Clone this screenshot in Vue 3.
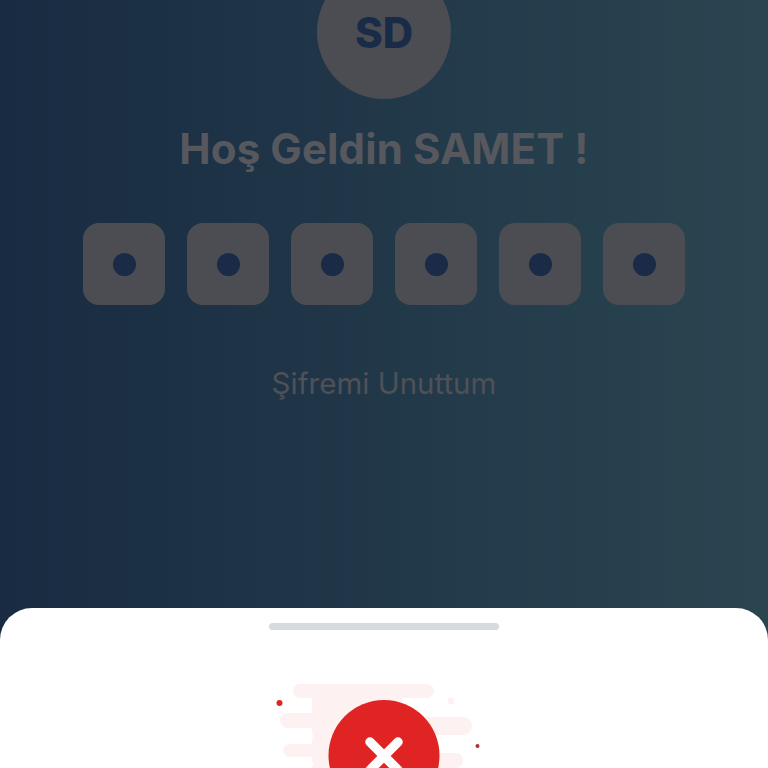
<script setup>
const dots = [1, 2, 3, 4, 5, 6]
</script>

<template>
  <div class="page">
    <div class="avatar">SD</div>
    <h1 class="title">Hoş Geldin SAMET !</h1>
    <div class="pins">
      <div v-for="d in dots" :key="d" class="pin"><span class="dot"></span></div>
    </div>
    <div class="forgot">Şifremi Unuttum</div>
    <div class="sheet">
      <div class="handle"></div>
      <div class="art">
        <svg class="art-svg" width="260" height="108" viewBox="0 0 260 108">
          <g fill="#fdf1f1">
            <rect x="43" y="24" width="141" height="14" rx="7" />
            <rect x="62" y="30" width="90" height="78" />
            <rect x="30" y="53" width="60" height="15" rx="7.500" />
            <rect x="33" y="84" width="60" height="13" rx="6.500" />
            <rect x="120" y="57" width="102" height="18" rx="9" />
            <rect x="120" y="93" width="93" height="15" rx="7.500" />
            <circle cx="201" cy="41" r="3.500" />
          </g>
          <rect x="40" y="39" width="22" height="13" rx="6.500" fill="#fff" />
          <rect x="40" y="69" width="23" height="14" rx="7" fill="#fff" />
          <rect x="40" y="98" width="23" height="12" rx="6" fill="#fff" />
          <circle cx="29.500" cy="43" r="3" fill="#e02424" />
          <circle cx="227.500" cy="86" r="2" fill="#b82a34" />
          <circle cx="134" cy="95.500" r="55.500" fill="#e02424" />
          <path d="M120 82 L148 110 M148 82 L120 110" stroke="#fff" stroke-width="9.500" stroke-linecap="round" fill="none" />
        </svg>
      </div>
    </div>
  </div>
</template>

<style>
html, body { margin: 0; padding: 0; }
</style>

<style scoped>
.page {
  width: 768px;
  height: 768px;
  overflow: hidden;
  display: flex;
  flex-direction: column;
  align-items: center;
  background: linear-gradient(90deg, #192b42 0%, #1a2d43 8%, #2a4550 100%);
  font-family: Inter, "Liberation Sans", sans-serif;
}
.avatar {
  flex: none;
  width: 134px;
  height: 134px;
  margin-top: -35px;
  border-radius: 50%;
  background: #4b4d53;
  color: #1a2b48;
  font-size: 42px;
  font-weight: 800;
  letter-spacing: 0;
  display: flex;
  align-items: center;
  justify-content: center;
}
.title {
  flex: none;
  margin: 25px 0 0;
  height: 50px;
  line-height: 50px;
  font-size: 42px;
  font-weight: 700;
  letter-spacing: 0.1px;
  color: #56585e;
  white-space: nowrap;
}
.pins {
  flex: none;
  display: flex;
  gap: 22px;
  margin-top: 49px;
}
.pin {
  width: 82px;
  height: 82px;
  border-radius: 16px;
  background: #4b4d53;
  display: flex;
  align-items: center;
  justify-content: center;
}
.dot {
  width: 23px;
  height: 23px;
  border-radius: 50%;
  background: #1a2b48;
}
.forgot {
  flex: none;
  margin-top: 60px;
  height: 36px;
  line-height: 36px;
  font-size: 29.500px;
  color: #4f5158;
  white-space: nowrap;
}
.sheet {
  flex: none;
  width: 768px;
  height: 160px;
  margin-top: 207px;
  background: #fff;
  border-radius: 32px 32px 0 0;
  display: flex;
  flex-direction: column;
  align-items: center;
}
.handle {
  flex: none;
  width: 230px;
  height: 7px;
  margin-top: 15px;
  border-radius: 4px;
  background: #d6d9de;
}
.art {
  flex: none;
  width: 260px;
  height: 108px;
  margin-top: 30px;
  margin-right: 8px;
}
.art-svg {
  display: block;
}
</style>
